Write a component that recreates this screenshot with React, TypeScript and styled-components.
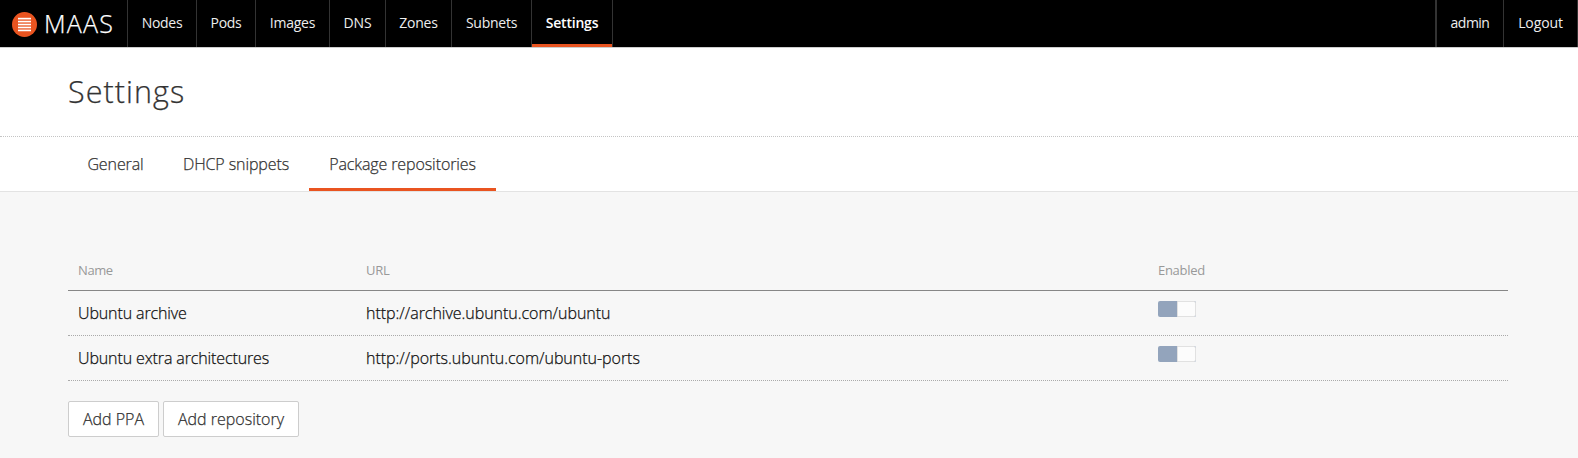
import styled, { createGlobalStyle } from "styled-components";

const GlobalStyle = createGlobalStyle`
  * { box-sizing: border-box; }
  body {
    margin: 0;
    background: #f7f7f7;
    color: #333;
    font-family: "Open Sans", "Noto Sans", sans-serif;
    font-weight: 300;
    font-size: 16px;
    -webkit-text-stroke-width: 0.25px;
  }
`;

const Header = styled.header`
  display: flex;
  height: 48px;
  background: #000;
  border-bottom: 1px solid #cdcdcd;
`;

const Brand = styled.a`
  display: flex;
  width: 127px;
  padding: 12px 0 0 12px;
`;

const Wordmark = styled.span`
  margin: -1px 0 0 7px;
  font-size: 25px;
  line-height: 25px;
  letter-spacing: 1.2px;
  color: #fff;
`;

const Nav = styled.nav`
  display: flex;
  border-left: 1px solid #333;
  -webkit-text-stroke-width: 0;
`;

const UserNav = styled(Nav)`
  margin-left: auto;
  border-left-width: 2px;
`;

const NavLink = styled.a<{ $width: number; $tracking: number; $active?: boolean }>`
  width: ${(p) => p.$width}px;
  border-right: 1px solid #333;
  box-shadow: ${(p) => (p.$active ? "inset 0 -3px 0 #e95420" : "none")};
  color: ${(p) => (p.$active ? "#fff" : "#eee")};
  font-size: 14px;
  font-weight: ${(p) => (p.$active ? 600 : 400)};
  line-height: 46px;
  letter-spacing: ${(p) => p.$tracking}px;
  text-align: center;
  white-space: nowrap;
`;

const TitleBar = styled.section`
  height: 89px;
  padding-left: 68px;
  background: #fff;
  border-bottom: 1px dotted #c4c4c4;
`;

const Title = styled.h1`
  margin: 0;
  font-size: 30.5px;
  font-weight: 300;
  line-height: 86px;
  letter-spacing: 1.05px;
`;

const Tabs = styled.nav`
  display: flex;
  height: 55px;
  padding-left: 68px;
  background: #fff;
  border-bottom: 1px solid #e3e3e3;
`;

const Tab = styled.a<{ $width: number; $active?: boolean }>`
  width: ${(p) => p.$width}px;
  border-bottom: 3px solid ${(p) => (p.$active ? "#e95420" : "transparent")};
  line-height: 54px;
  letter-spacing: -0.1px;
  text-align: center;
  white-space: nowrap;
`;

const Content = styled.main`
  padding: 57px 70px 21px 68px;
`;

const Table = styled.div`
  width: 1440px;
  color: #111;
`;

const Row = styled.div`
  display: grid;
  grid-template-columns: 20% 55% 25%;
  height: 45px;
  border-bottom: 1px dotted #aaa;
`;

const HeadRow = styled(Row)`
  height: 42px;
  border-bottom: 1px solid #878787;
  -webkit-text-stroke-width: 0;
`;

const HeadCell = styled.div<{ $tracking?: number }>`
  padding: 0 10px;
  color: #999;
  font-size: 13px;
  font-weight: 400;
  line-height: 43px;
  letter-spacing: ${(p) => p.$tracking ?? 0}px;
`;

const Cell = styled.div<{ $tracking?: number }>`
  padding: 0 10px;
  line-height: 44px;
  letter-spacing: ${(p) => p.$tracking ?? 0}px;
`;

const Switch = styled.span`
  display: flex;
  width: 38px;
  height: 16px;
  margin-top: 10px;
  border-radius: 2px;
  background: #93a4bc;
  overflow: hidden;
`;

const Knob = styled.span`
  width: 19px;
  margin-left: auto;
  border: 1px solid #e1e1e1;
  border-radius: 0 2px 2px 0;
  background: #fcfcfc;
`;

const Actions = styled.div`
  display: flex;
  gap: 4px;
  margin-top: 20px;
`;

const Button = styled.button<{ $width: number }>`
  width: ${(p) => p.$width}px;
  height: 36px;
  padding: 0;
  border: 1px solid #cdcdcd;
  border-radius: 2px;
  background: #fff;
  color: #333;
  font: inherit;
  line-height: 34px;
  white-space: nowrap;
`;

const MaasIcon = () => (
  <svg width="25" height="25" viewBox="0 0 25 25">
    <circle cx="12.5" cy="12.5" r="12.5" fill="#e95420" />
    {[0, 1, 2, 3, 4].map((i) => (
      <rect key={i} x="6" y={5.8 + i * 2.95} width="13" height="1.65" fill="#fff" />
    ))}
  </svg>
);

const links = [
  { label: "Nodes", width: 69, tracking: -0.3 },
  { label: "Pods", width: 59, tracking: -0.3 },
  { label: "Images", width: 74, tracking: -0.25 },
  { label: "DNS", width: 56, tracking: -0.2 },
  { label: "Zones", width: 66, tracking: -0.25 },
  { label: "Subnets", width: 80, tracking: -0.25 },
  { label: "Settings", width: 81, tracking: -0.2, active: true },
];

const repositories = [
  { name: "Ubuntu archive", url: "http://archive.ubuntu.com/ubuntu" },
  { name: "Ubuntu extra architectures", url: "http://ports.ubuntu.com/ubuntu-ports" },
];

export default function App() {
  return (
    <>
      <GlobalStyle />
      <Header>
        <Brand>
          <MaasIcon />
          <Wordmark>MAAS</Wordmark>
        </Brand>
        <Nav>
          {links.map((l) => (
            <NavLink key={l.label} $width={l.width} $tracking={l.tracking} $active={l.active}>
              {l.label}
            </NavLink>
          ))}
        </Nav>
        <UserNav>
          <NavLink $width={67} $tracking={-0.5}>admin</NavLink>
          <NavLink $width={74} $tracking={-0.1}>Logout</NavLink>
        </UserNav>
      </Header>
      <TitleBar>
        <Title>Settings</Title>
      </TitleBar>
      <Tabs>
        <Tab $width={95}>General</Tab>
        <Tab $width={146}>DHCP snippets</Tab>
        <Tab $width={187} $active>Package repositories</Tab>
      </Tabs>
      <Content>
        <Table>
          <HeadRow>
            <HeadCell $tracking={-0.4}>Name</HeadCell>
            <HeadCell $tracking={-0.2}>URL</HeadCell>
            <HeadCell $tracking={-0.3}>Enabled</HeadCell>
          </HeadRow>
          {repositories.map((r) => (
            <Row key={r.name}>
              <Cell $tracking={-0.12}>{r.name}</Cell>
              <Cell $tracking={-0.03}>{r.url}</Cell>
              <Cell>
                <Switch>
                  <Knob />
                </Switch>
              </Cell>
            </Row>
          ))}
        </Table>
        <Actions>
          <Button $width={91}>Add PPA</Button>
          <Button $width={136}>Add repository</Button>
        </Actions>
      </Content>
    </>
  );
}
